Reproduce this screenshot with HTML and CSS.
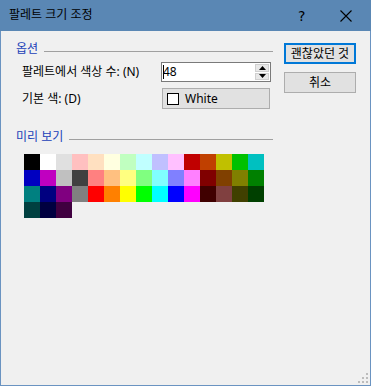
FILE: index.html
```html
<!DOCTYPE html>
<html lang="ko">
<head>
<meta charset="utf-8">
<title>팔레트 크기 조정</title>
<link rel="stylesheet" href="styles.css">
</head>
<body>
<div class="window">
  <div class="titlebar">
    <span class="title">팔레트 크기 조정</span>
    <span class="help">?</span>
    <span class="close">
      <svg width="12" height="12" viewBox="0 0 12 12"><path d="M0.5 0.5 L11.5 11.5 M11.5 0.5 L0.5 11.5" stroke="#000" stroke-width="1.1" fill="none"/></svg>
    </span>
  </div>
  <div class="content">
    <div class="main">
      <div class="left">
        <div class="group-head"><span class="group-title">옵션</span><span class="rule"></span></div>
        <div class="row row-count">
          <span class="label">팔레트에서 색상 수: (N)</span>
          <div class="spin">
            <span class="spin-text"><span class="caret"></span>48</span>
            <span class="spin-btns">
              <span class="spin-btn"><svg width="7" height="4" viewBox="0 0 7 4"><path d="M0 4 L3.5 0 L7 4 Z" fill="#000"/></svg></span>
              <span class="spin-btn"><svg width="7" height="4" viewBox="0 0 7 4"><path d="M0 0 L7 0 L3.5 4 Z" fill="#000"/></svg></span>
            </span>
          </div>
        </div>
        <div class="row row-color">
          <span class="label">기본 색: (D)</span>
          <div class="color-btn"><span class="swatch"></span><span>White</span></div>
        </div>
        <div class="group-head preview-head"><span class="group-title">미리 보기</span><span class="rule"></span></div>
        <div class="palette">
          <span style="background:#000000"></span><span style="background:#ffffff"></span><span style="background:#e0e0e0"></span><span style="background:#ffc0c0"></span><span style="background:#ffe0c0"></span><span style="background:#ffffe0"></span><span style="background:#c0ffc0"></span><span style="background:#c0ffff"></span><span style="background:#c0c0ff"></span><span style="background:#ffc0ff"></span><span style="background:#c00000"></span><span style="background:#c04000"></span><span style="background:#c0c000"></span><span style="background:#00c000"></span><span style="background:#00c0c0"></span>
          <span style="background:#0000c0"></span><span style="background:#c000c0"></span><span style="background:#c0c0c0"></span><span style="background:#404040"></span><span style="background:#ff8080"></span><span style="background:#ffc080"></span><span style="background:#ffff80"></span><span style="background:#80ff80"></span><span style="background:#80ffff"></span><span style="background:#8080ff"></span><span style="background:#ff80ff"></span><span style="background:#800000"></span><span style="background:#804000"></span><span style="background:#808000"></span><span style="background:#008000"></span>
          <span style="background:#008080"></span><span style="background:#000080"></span><span style="background:#800080"></span><span style="background:#808080"></span><span style="background:#ff0000"></span><span style="background:#ff8000"></span><span style="background:#ffff00"></span><span style="background:#00ff00"></span><span style="background:#00ffff"></span><span style="background:#0000ff"></span><span style="background:#ff00ff"></span><span style="background:#400000"></span><span style="background:#804040"></span><span style="background:#404000"></span><span style="background:#004000"></span>
          <span style="background:#004040"></span><span style="background:#000040"></span><span style="background:#400040"></span>
        </div>
      </div>
      <div class="right">
        <div class="btn btn-default">괜찮았던 것</div>
        <div class="btn">취소</div>
      </div>
    </div>
    <div class="grip">
      <svg width="11" height="11" viewBox="0 0 11 11">
        <rect x="8" y="0" width="2" height="2" fill="#bcbcbc"/>
        <rect x="4" y="4" width="2" height="2" fill="#bcbcbc"/>
        <rect x="8" y="4" width="2" height="2" fill="#bcbcbc"/>
        <rect x="0" y="8" width="2" height="2" fill="#bcbcbc"/>
        <rect x="4" y="8" width="2" height="2" fill="#bcbcbc"/>
        <rect x="8" y="8" width="2" height="2" fill="#bcbcbc"/>
      </svg>
    </div>
  </div>
</div>
</body>
</html>
```

FILE: styles.css
```css
html, body {
  margin: 0;
  padding: 0;
}
body {
  font-family: "Noto Sans", "Noto Sans CJK KR", sans-serif;
  font-size: 12px;
  color: #000;
  background: #f0f0f0;
}
.window {
  width: 371px;
  height: 386px;
  box-sizing: border-box;
  display: flex;
  flex-direction: column;
  border: 1px solid #6a93c1;
  border-top: none;
  background: #f0f0f0;
}
.titlebar {
  height: 31px;
  flex: none;
  margin: 0 -1px;
  background: #5a87b4;
  display: flex;
  align-items: center;
  padding-left: 9px;
}
.title {
  font-size: 12px;
  flex: 1;
  line-height: 16px;
  padding-bottom: 1px;
}
.help {
  width: 8px;
  font-size: 14px;
  margin-right: 34px;
  line-height: 16px;
  font-family: "DejaVu Sans", sans-serif;
}
.close {
  display: flex;
  margin-right: 19px;
}
.content {
  flex: 1;
  display: flex;
  flex-direction: column;
  padding: 10px 0 0 15px;
  position: relative;
}
.main {
  display: flex;
  gap: 11px;
}
.left {
  width: 257px;
  display: flex;
  flex-direction: column;
}
.group-head {
  display: flex;
  align-items: center;
  height: 16px;
}
.group-title {
  color: #1a3fb8;
  line-height: 16px;
  margin-right: 6px;
}
.rule {
  flex: 1;
  height: 1px;
  background: #a0a0a0;
  margin-top: 4px;
}
.row {
  display: flex;
  align-items: center;
}
.row-count {
  margin-top: 5px;
  height: 20px;
}
.row-color {
  margin-top: 6px;
  height: 21px;
}
.label {
  width: 139px;
  padding-left: 6px;
  line-height: 16px;
}
.spin {
  width: 110px;
  height: 20px;
  box-sizing: border-box;
  border: 1px solid #7a7a7a;
  background: #fff;
  display: flex;
}
.spin-text {
  flex: 1;
  display: flex;
  align-items: center;
  padding-left: 1px;
  line-height: 16px;
}
.caret {
  width: 1px;
  height: 14px;
  background: #000;
  margin-right: -1px;
}
.spin-btns {
  width: 16px;
  display: flex;
  flex-direction: column;
  padding: 1px;
  gap: 1px;
  box-sizing: border-box;
}
.spin-btn {
  flex: 1;
  background: #e8e8e8;
  border: 1px solid #d0d0d0;
  display: flex;
  align-items: center;
  justify-content: center;
}
.color-btn {
  margin-left: 1px;
  width: 108px;
  height: 21px;
  box-sizing: border-box;
  border: 1px solid #adadad;
  background: #e1e1e1;
  display: flex;
  align-items: center;
  padding-left: 4px;
  gap: 6px;
  line-height: 16px;
}
.swatch {
  width: 10px;
  height: 10px;
  border: 1px solid #000;
  background: #fff;
}
.preview-head {
  margin-top: 20px;
}
.palette {
  margin: 9px 0 0 8px;
  display: grid;
  grid-template-columns: repeat(15, 16px);
  grid-auto-rows: 16px;
}
.right {
  display: flex;
  flex-direction: column;
  gap: 8px;
  margin-top: 2px;
}
.btn {
  width: 72px;
  height: 21px;
  box-sizing: border-box;
  border: 1px solid #adadad;
  background: #e1e1e1;
  display: flex;
  align-items: center;
  justify-content: center;
  line-height: 16px;
}
.btn-default {
  border: 2px solid #0078d7;
  height: 21px;
}
.grip {
  position: absolute;
  right: 1px;
  bottom: 1px;
  display: flex;
}
```
